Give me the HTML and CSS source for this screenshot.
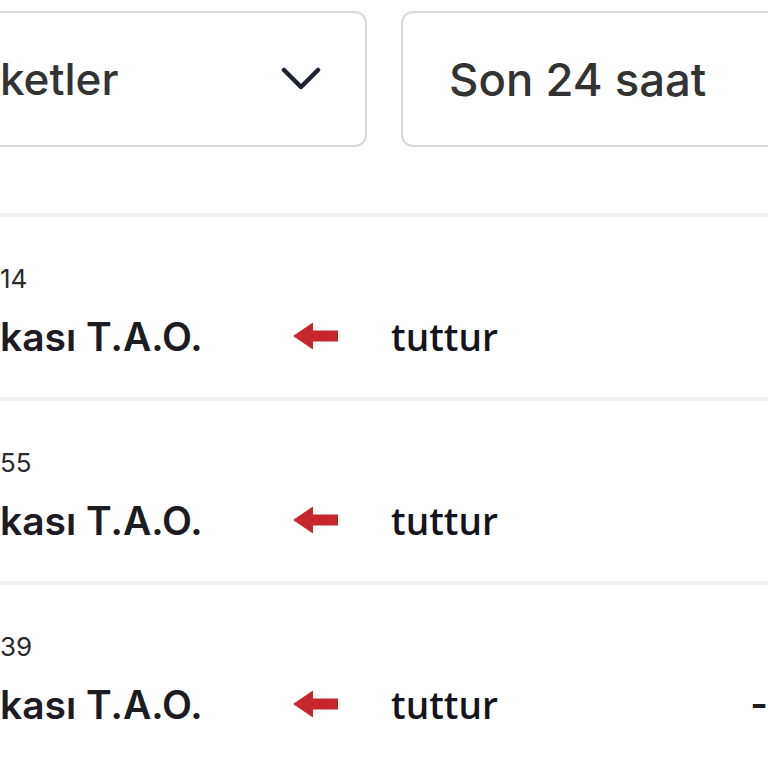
FILE: index.html
```html
<!DOCTYPE html>
<html lang="tr">
<head>
<meta charset="utf-8">
<link rel="stylesheet" href="styles.css">
</head>
<body>
<div class="page">
  <div class="filters">
    <div class="select select-market">
      <span class="select-text">ketler</span>
      <svg class="chevron" width="40" height="26" viewBox="0 0 40 26"><path d="M3 4 L20 21 L37 4" fill="none" stroke="#1c2230" stroke-width="4.5" stroke-linecap="round" stroke-linejoin="round"/></svg>
    </div>
    <div class="select select-time">
      <span class="select-text">Son 24 saat</span>
    </div>
  </div>
  <div class="list">
    <div class="row">
      <div class="time">14</div>
      <div class="main">
        <span class="name">kası T.A.O.</span>
        <svg class="arrow" width="48" height="30" viewBox="0 0 48 30"><path d="M1 15 L21 1.5 L21 9.5 L46 9.5 L46 20.5 L21 20.5 L21 28.5 Z" fill="#c7262c"/></svg>
        <span class="site">tuttur</span>
      </div>
    </div>
    <div class="row">
      <div class="time">55</div>
      <div class="main">
        <span class="name">kası T.A.O.</span>
        <svg class="arrow" width="48" height="30" viewBox="0 0 48 30"><path d="M1 15 L21 1.5 L21 9.5 L46 9.5 L46 20.5 L21 20.5 L21 28.5 Z" fill="#c7262c"/></svg>
        <span class="site">tuttur</span>
      </div>
    </div>
    <div class="row">
      <div class="time">39</div>
      <div class="main">
        <span class="name">kası T.A.O.</span>
        <svg class="arrow" width="48" height="30" viewBox="0 0 48 30"><path d="M1 15 L21 1.5 L21 9.5 L46 9.5 L46 20.5 L21 20.5 L21 28.5 Z" fill="#c7262c"/></svg>
        <span class="site">tuttur</span>
        <span class="value">-</span>
      </div>
    </div>
  </div>
</div>
</body>
</html>
```
FILE: styles.css
```css
html, body {
  margin: 0;
  padding: 0;
  background: #ffffff;
  overflow: hidden;
}
body {
  width: 768px;
  height: 768px;
  font-family: Inter, "Liberation Sans", sans-serif;
}
.page {
  width: 768px;
  overflow: hidden;
}
.filters {
  display: flex;
  gap: 34px;
  margin-left: -20px;
  margin-top: 11px;
}
.select {
  box-sizing: border-box;
  height: 136px;
  border: 2px solid #d9d9d9;
  border-radius: 12px;
  display: flex;
  align-items: center;
  background: #fff;
}
.select-market {
  flex: 0 0 387px;
  padding: 0 44px 0 18px;
  justify-content: space-between;
}
.select-time {
  flex: 0 0 420px;
  padding-left: 46px;
}
.select-text {
  font-size: 44px;
  font-weight: 500;
  color: #333333;
}
.select-time .select-text {
  font-size: 45.5px;
}
.chevron {
  display: block;
}
.list {
  margin-top: 66px;
}
.row {
  height: 180px;
  border-top: 4px solid #f1f1f1;
}
.time {
  padding-top: 47px;
  font-size: 26px;
  line-height: 30px;
  color: #2a2a2a;
}
.main {
  display: flex;
  align-items: center;
  margin-top: 22px;
  height: 40px;
}
.name {
  flex: 0 0 292px;
  font-size: 39px;
  font-weight: 600;
  color: #1c1c22;
}
.arrow {
  display: block;
  flex: 0 0 48px;
}
.site {
  margin-left: 51px;
  font-family: "Open Sans", sans-serif;
  font-size: 37px;
  font-weight: 650;
  color: #14141c;
}
.value {
  margin-left: auto;
  margin-right: 0;
  font-size: 38px;
  font-weight: 600;
  color: #1c1c22;
}
```
